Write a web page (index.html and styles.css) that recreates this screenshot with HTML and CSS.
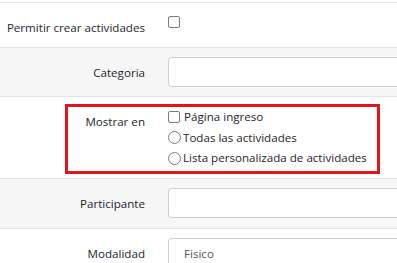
FILE: index.html
```html
<!DOCTYPE html>
<html lang="es">
<head>
<meta charset="utf-8">
<link rel="stylesheet" href="styles.css">
</head>
<body>
<div class="form">
  <div class="row row-check">
    <div class="label">Permitir crear actividades</div>
    <div class="field"><span class="box"></span></div>
  </div>
  <div class="row row-input alt">
    <div class="label">Categoria</div>
    <div class="field"><div class="input"></div></div>
  </div>
  <div class="row row-options">
    <div class="label">Mostrar en</div>
    <div class="field options">
      <div class="opt"><span class="box"></span>Página ingreso</div>
      <div class="opt"><span class="radio"></span>Todas las actividades</div>
      <div class="opt"><span class="radio"></span>Lista personalizada de actividades</div>
    </div>
    <div class="highlight"></div>
  </div>
  <div class="row row-input alt tall">
    <div class="label">Participante</div>
    <div class="field"><div class="input"></div></div>
  </div>
  <div class="row row-input">
    <div class="label">Modalidad</div>
    <div class="field"><div class="input">Fisico</div></div>
  </div>
</div>
</body>
</html>
```

FILE: styles.css
```css
html, body {
  margin: 0;
  padding: 0;
  background: #fff;
  overflow: hidden;
}
body {
  font-family: "Open Sans", "Liberation Sans", sans-serif;
  font-size: 11.6px;
  color: #1f2530;
}
.form {
  padding-top: 2px;
  width: 397px;
  height: 261px;
  overflow: hidden;
}
.row {
  display: grid;
  grid-template-columns: 145px 1fr;
  column-gap: 23px;
  border-top: 1px solid #e4e4e4;
  position: relative;
}
.alt {
  background: #f7f7f7;
}
.label {
  text-align: right;
  line-height: 20px;
  white-space: nowrap;
}
.row-check {
  height: 44px;
}
.row-check .label {
  padding-top: 15px;
}
.row-check .box {
  margin-top: 13px;
}
.row-input {
  padding: 9px 0;
  align-items: center;
}
.row-input .label {
  padding-top: 1px;
}
.row-input.tall {
  padding-bottom: 10px;
}
.field {
  min-width: 0;
}
.input {
  width: 200px;
  height: 28px;
  border: 1px solid #cfcfcf;
  border-right: none;
  border-radius: 4px 0 0 4px;
  background: #fff;
  box-sizing: content-box;
  padding: 0 15px;
  line-height: 30px;
  color: #555;
  margin-right: -40px;
}
.row-options {
  height: 82px;
  box-sizing: border-box;
  padding-top: 10px;
}
.row-options .label {
  padding-top: 5px;
}
.options {
  display: flex;
  flex-direction: column;
}
.opt {
  display: flex;
  align-items: center;
  line-height: 20.5px;
  height: 20.5px;
  white-space: nowrap;
}
.box {
  display: block;
  width: 10px;
  height: 10px;
  border: 1px solid #7b7b7b;
  border-radius: 2px;
  background: #fff;
}
.opt .box {
  margin-right: 4px;
}
.radio {
  display: block;
  width: 11px;
  height: 11px;
  border: 1px solid #7b7b7b;
  border-radius: 50%;
  background: #fff;
  margin-right: 2px;
}
.highlight {
  position: absolute;
  left: 65px;
  top: 7px;
  width: 309px;
  height: 64px;
  border: 3px solid #e3141c;
  pointer-events: none;
}
```
